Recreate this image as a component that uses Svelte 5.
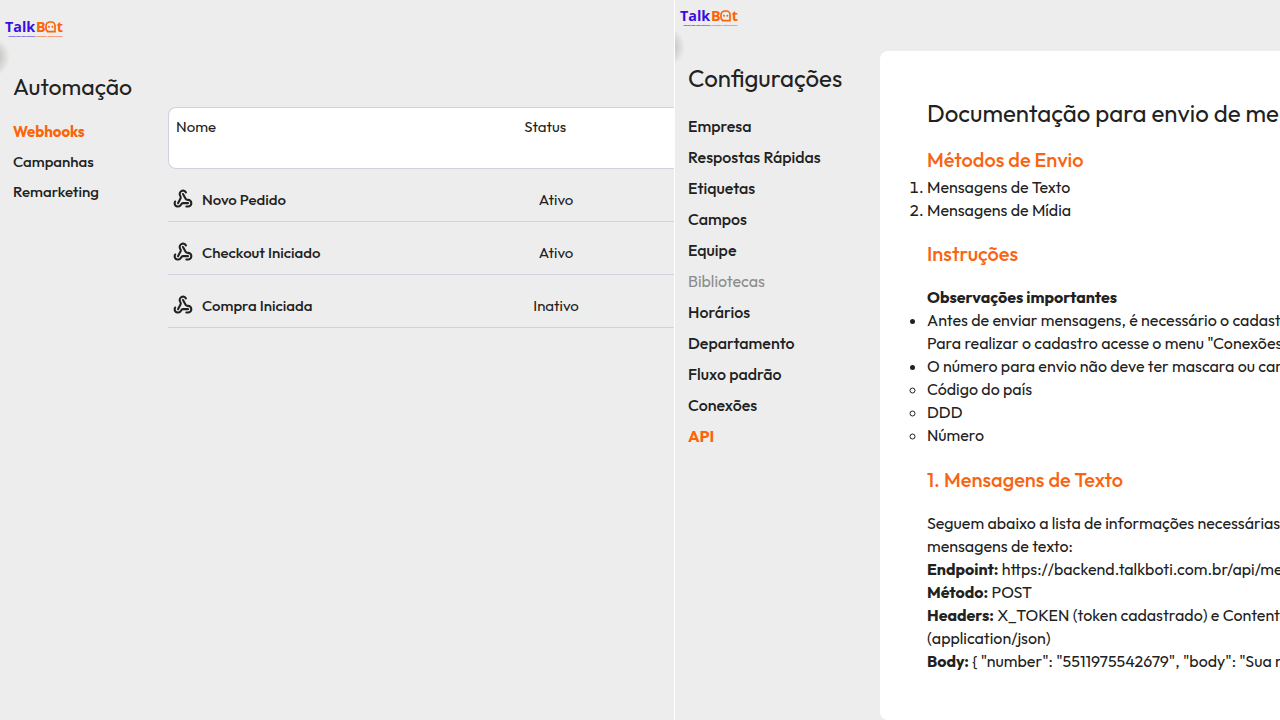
<script>
  const automations = [
    { name: 'Novo Pedido', status: 'Ativo' },
    { name: 'Checkout Iniciado', status: 'Ativo' },
    { name: 'Compra Iniciada', status: 'Inativo' },
  ];
  const automationLinks = ['Webhooks', 'Campanhas', 'Remarketing'];
  const settingsLinks = [
    'Empresa', 'Respostas Rápidas', 'Etiquetas', 'Campos', 'Equipe', 'Bibliotecas',
    'Horários', 'Departamento', 'Fluxo padrão', 'Conexões', 'API',
  ];
</script>

{#snippet logo()}
  <svg class="logo" viewBox="0 0 180 57" role="img" aria-label="TalkBot">
    <text x="0" y="37" class="brand blue">Talk</text>
    <text x="93" y="37" class="brand orange">B</text>
    <path d="M126 35H150V17a11 11 0 0 0-11-11h-4a12 12 0 0 0-12 12v7a9 9 0 0 0 9 10" class="bot" />
    <circle cx="132" cy="20" r="3" class="eye" />
    <circle cx="142" cy="20" r="3" class="eye" />
    <text x="155" y="37" class="brand orange">t</text>
    <text x="10" y="50" class="tagline"><tspan class="blue">Conversas inteligentes,</tspan><tspan class="orange"> respostas instantâneas</tspan></text>
  </svg>
{/snippet}

<div class="page">
  <section class="panel automation">
    <header>{@render logo()}</header>
    <span class="handle"></span>
    <div class="body">
      <nav aria-label="Automação">
        <h1>Automação</h1>
        {#each automationLinks as link, i}
          <a href="#{i}" class:active={i === 0}>{link}</a>
        {/each}
      </nav>
      <div class="list">
        <table>
          <thead>
            <tr><th>Nome</th><th>Status</th></tr>
          </thead>
          <tbody>
            {#each automations as row}
              <tr>
                <td>
                  <span class="name">
                    <svg viewBox="0 0 24 24" aria-hidden="true">
                      <path d="M18 16.98h-5.99c-1.1 0-1.95.94-2.48 1.9A4 4 0 0 1 2 17c.01-.7.2-1.4.57-2" />
                      <path d="m6 17 3.13-5.78c.53-.97.1-2.18-.5-3.1a4 4 0 1 1 6.89-4.06" />
                      <path d="m12 6 3.13 5.73C15.66 12.7 16.9 13 18 13a4 4 0 0 1 0 8H16" />
                    </svg>
                    {row.name}
                  </span>
                </td>
                <td class="status">{row.status}</td>
              </tr>
            {/each}
          </tbody>
        </table>
      </div>
    </div>
  </section>

  <section class="panel settings">
    <header>{@render logo()}</header>
    <span class="handle"></span>
    <div class="body">
      <nav aria-label="Configurações">
        <h1>Configurações</h1>
        {#each settingsLinks as link}
          <a href="#{link}" class:active={link === 'API'} class:disabled={link === 'Bibliotecas'}>{link}</a>
        {/each}
      </nav>
      <article>
        <h2>Documentação para envio de men</h2>
        <h3>Métodos de Envio</h3>
        <ol>
          <li>Mensagens de Texto</li>
          <li>Mensagens de Mídia</li>
        </ol>
        <h3>Instruções</h3>
        <div class="block">
          <strong>Observações importantes</strong>
          <ul>
            <li>Antes de enviar mensagens, é necessário o cadastr<br />Para realizar o cadastro acesse o menu "Conexões</li>
            <li>O número para envio não deve ter mascara ou cara</li>
            <li class="sub">Código do país</li>
            <li class="sub">DDD</li>
            <li class="sub">Número</li>
          </ul>
        </div>
        <h3>1. Mensagens de Texto</h3>
        <p class="block">
          Seguem abaixo a lista de informações necessárias<br />mensagens de texto:<br />
          <strong>Endpoint:</strong> https://backend.talkboti.com.br/api/me<br />
          <strong>Método:</strong> POST<br />
          <strong>Headers:</strong> X_TOKEN (token cadastrado) e Content-<br />(application/json)<br />
          <strong>Body:</strong> {'{'} "number": "5511975542679", "body": "Sua m
        </p>
      </article>
    </div>
  </section>
</div>

<style>
  :global(body) {
    margin: 0;
    background: #ededed;
  }
  .page {
    display: grid;
    grid-template-columns: minmax(0, 675fr) minmax(0, 605fr);
    min-height: 100vh;
    box-sizing: border-box;
    background: #ededed;
    color: #212121;
    font: 16px/23px Outfit, Lato, sans-serif;
  }
  .panel {
    position: relative;
    display: flex;
    flex-direction: column;
    overflow: hidden;
  }
  .automation {
    border-right: 1px solid #fff;
    font-size: 15px;
  }
  header {
    display: flex;
    align-items: flex-end;
    padding-left: 5px;
    height: 39px;
  }
  .settings header {
    height: 28px;
  }
  .logo {
    width: 60px;
    height: 19px;
    overflow: visible;
  }
  .brand {
    font: 700 43px 'Open Sans', sans-serif;
  }
  .tagline {
    font: 700 7px 'Open Sans', sans-serif;
  }
  .blue {
    fill: #3a0ee0;
  }
  .orange,
  .eye {
    fill: #fc6408;
  }
  .bot {
    fill: none;
    stroke: #fc6408;
    stroke-width: 5;
  }
  .handle {
    position: absolute;
    left: -28px;
    top: 37px;
    width: 38px;
    height: 40px;
    border-radius: 50%;
    background: radial-gradient(closest-side, #c8c6c4 40%, #ededed00);
  }
  .settings .handle {
    top: 27px;
  }
  .body {
    display: flex;
    flex: 1;
  }
  nav {
    display: flex;
    flex-direction: column;
    flex: none;
    box-sizing: border-box;
    width: 168px;
    padding: 32px 0 0 13px;
  }
  .settings nav {
    width: 205px;
    padding-top: 34px;
  }
  h1,
  h2 {
    margin: 0;
    font-size: 24px;
    line-height: 32px;
    font-weight: 400;
  }
  h1 {
    margin-bottom: 14px;
  }
  .automation h1 {
    font-size: 23px;
  }
  .settings h1 {
    margin-bottom: 17px;
  }
  a {
    color: inherit;
    font-weight: 500;
    line-height: 30px;
    text-decoration: none;
    white-space: nowrap;
  }
  .settings a {
    line-height: 31px;
  }
  .active {
    color: #fc6408;
    font-weight: 700;
  }
  .disabled {
    color: #8c8c8c;
    font-weight: 400;
  }
  .list {
    flex: 1;
    padding-top: 68px;
  }
  table {
    width: 100%;
    border-collapse: separate;
    border-spacing: 0;
    table-layout: fixed;
  }
  th {
    box-sizing: border-box;
    height: 62px;
    padding: 7px;
    background: #fff;
    border: solid #d0d0e0;
    border-width: 1px 0;
    font-weight: 400;
    text-align: left;
    vertical-align: top;
  }
  th:first-child {
    width: 69%;
    border-left-width: 1px;
    border-radius: 8px 0 0 8px;
  }
  td {
    box-sizing: border-box;
    height: 53px;
    padding: 8px 5px 0;
    border-bottom: 1px solid #d0d0e0;
  }
  .status {
    padding-right: 84px;
    text-align: center;
  }
  .name {
    display: flex;
    align-items: center;
    gap: 9px;
    font-weight: 500;
  }
  .name svg {
    width: 20px;
    height: 20px;
    fill: none;
    stroke: #212121;
    stroke-width: 2.5;
    stroke-linecap: round;
    stroke-linejoin: round;
  }
  article {
    flex: 1;
    min-width: 0;
    padding: 46px 0 0 47px;
    margin-top: 23px;
    border-radius: 8px 0 0 8px;
    background: #fff;
    white-space: nowrap;
    overflow: hidden;
  }
  h2 {
    margin-bottom: 19px;
  }
  h3 {
    margin: 0;
    color: #f86410;
    font-size: 20px;
    line-height: 24px;
    font-weight: 500;
  }
  ol,
  ul {
    margin: 0;
    padding: 0;
  }
  ol {
    padding: 4px 0 20px;
  }
  .sub {
    list-style-type: circle;
  }
  .block {
    margin: 20px 0 21px;
  }
</style>
